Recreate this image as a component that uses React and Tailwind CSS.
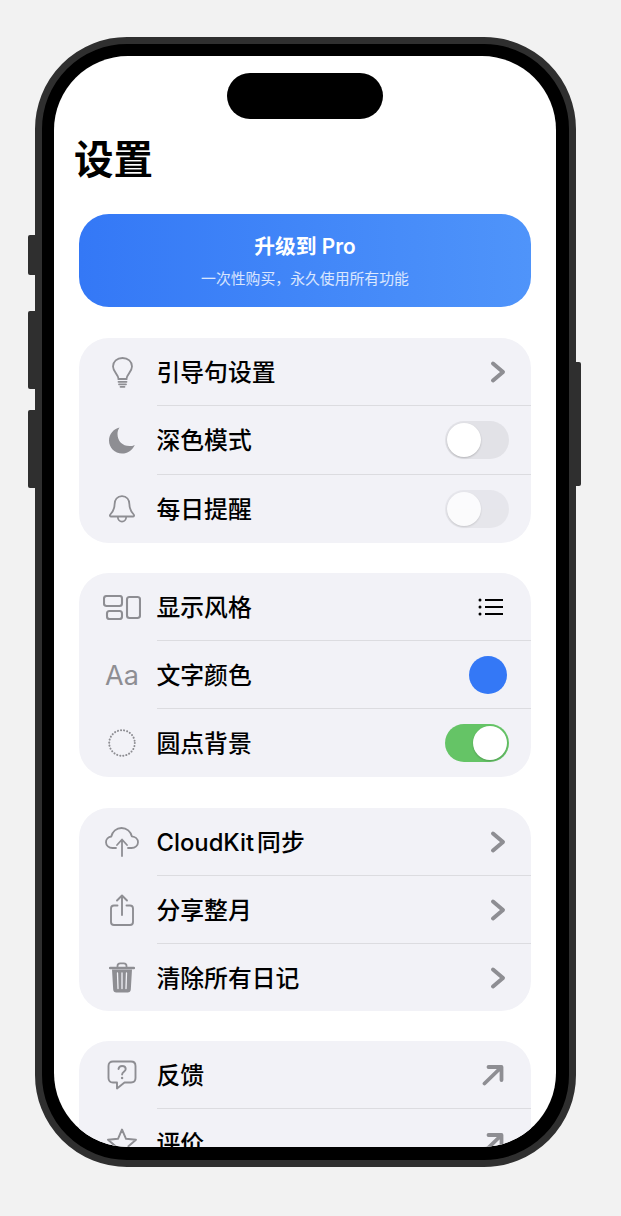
const font = { fontFamily: '"Inter", "Noto Sans CJK SC", sans-serif' }

function Chevron() {
  return (
    <svg width="16" height="24" viewBox="0 0 16 24" fill="none" stroke="#8e8e93" strokeWidth="4" strokeLinecap="round" strokeLinejoin="round" className="mr-[3px]">
      <path d="M3 3.500l10 8.500-10 8.500" />
    </svg>
  )
}

function Arrow() {
  return (
    <svg width="22" height="22" viewBox="0 0 22 22" fill="none" stroke="#8e8e93" strokeWidth="3.800" strokeLinecap="round" strokeLinejoin="round" className="mr-[5px]">
      <path d="M2.500 19.500L19 3.500M6.500 3h13v13" />
    </svg>
  )
}

function Toggle({ on, faded }) {
  return (
    <div className={`flex h-[38px] w-[64px] items-center rounded-full p-[2px] ${on ? 'justify-end bg-[#65c466]' : 'justify-start bg-[#e2e2e7]'} ${faded ? 'opacity-70' : ''}`}>
      <div className="h-[34px] w-[34px] rounded-full bg-white shadow-[0_1px_2px_rgba(0,0,0,0.2)]" />
    </div>
  )
}

const Bulb = () => (
  <svg width="21" height="31" viewBox="0 0 21 31" fill="none" stroke="#8e8e93" strokeWidth="1.800" strokeLinecap="round">
    <path d="M6.500 22c0-4.500-5.500-7-5.500-12.500C1 4.500 5 1 10.500 1S20 4.500 20 9.500C20 15 14.500 17.500 14.500 22z" />
    <path d="M6.500 24.800h8M7 27.300h7M8.500 29.800h4" />
  </svg>
)

const Moon = () => (
  <svg width="28" height="27" viewBox="0 0 28 27" fill="#8e8e93">
    <path d="M11.500 .5C5.500 2 1 7 1 13.500 1 20.700 6.800 26.500 14 26.500c5.600 0 10.500-3.500 12.800-8.600-1.600.8-3.500 1.200-5.300 1.200C14.500 19.100 9.500 14 9.500 7c0-2.400.7-4.600 2-6.500z" />
  </svg>
)

const Bell = () => (
  <svg width="28" height="28" viewBox="0 0 28 28" fill="none" stroke="#8e8e93" strokeWidth="1.800" strokeLinejoin="round">
    <path d="M14 1.200c-4.800 0-7.400 3.500-7.400 8 0 4.800-1.500 7.300-4.300 10.300-.8.900-.3 2 .8 2h21.800c1.100 0 1.600-1.100.8-2-2.800-3-4.300-5.500-4.300-10.300 0-4.500-2.600-8-7.400-8z" />
    <path d="M9.800 21.800c0 2.800 1.900 4.800 4.200 4.800s4.200-2 4.200-4.800" />
  </svg>
)

const Layout = () => (
  <svg width="38" height="25" viewBox="0 0 38 25" fill="none" stroke="#8e8e93" strokeWidth="2.100">
    <rect x="1" y="1" width="18" height="10" rx="2.500" />
    <rect x="4" y="16" width="15" height="8" rx="2.500" />
    <rect x="24" y="2" width="13" height="21" rx="2.500" />
  </svg>
)

const Dots = () => (
  <svg width="28" height="28" viewBox="0 0 28 28" fill="none" stroke="#8e8e93" strokeWidth="2" strokeLinecap="round" strokeDasharray="0.1 3">
    <circle cx="14" cy="14" r="12.800" />
  </svg>
)

const CloudUp = () => (
  <svg width="34" height="30" viewBox="0 0 34 30" fill="none" stroke="#8e8e93" strokeWidth="1.800" strokeLinecap="round" strokeLinejoin="round">
    <path d="M11 21H7.500C3.800 21 1 18.500 1 15.200c0-3 2.300-5.400 5.300-5.700C7.300 4.600 11.500 1 16.500 1c5.200 0 9.300 3.500 10.300 8.300 3.500.3 6.200 2.800 6.200 5.900 0 3.300-2.800 5.800-6.500 5.800H23" />
    <path d="M17 29V13M12 18l5-5.500 5 5.500" />
  </svg>
)

const Share = () => (
  <svg width="24" height="32" viewBox="0 0 24 32" fill="none" stroke="#8e8e93" strokeWidth="1.900" strokeLinecap="round" strokeLinejoin="round">
    <path d="M7.500 11.500H4c-1.700 0-3 1.300-3 3V28c0 1.700 1.300 3 3 3h16c1.700 0 3-1.300 3-3V14.500c0-1.700-1.300-3-3-3h-3.500" />
    <path d="M12 21V2M7 6.500L12 1.500l5 5" />
  </svg>
)

const Trash = () => (
  <svg width="26" height="31" viewBox="0 0 26 31" fill="none">
    <path d="M1 6h24" stroke="#8e8e93" strokeWidth="2.400" strokeLinecap="round" />
    <path d="M8.500 5.500V4c0-1.600 1-2.700 2.700-2.700h3.600c1.700 0 2.700 1.100 2.700 2.700v1.500" stroke="#8e8e93" strokeWidth="1.800" />
    <path d="M3 7.500h20l-1.200 20c-.1 1.900-1.300 3-3.100 3H7.300c-1.800 0-3-1.100-3.100-3z" fill="#8e8e93" />
    <path d="M8.500 11l.5 15.500M13 11v15.500M17.500 11L17 26.500" stroke="#f2f2f7" strokeWidth="1.300" strokeLinecap="round" />
  </svg>
)

const Question = () => (
  <svg width="30" height="30" viewBox="0 0 30 30" fill="none" stroke="#8e8e93" strokeWidth="1.900" strokeLinejoin="round">
    <path d="M6 1.500h18c2.800 0 4.500 1.700 4.500 4.500v12c0 2.800-1.700 4.500-4.500 4.500h-6.500L10 28.500v-6H6c-2.800 0-4.500-1.700-4.500-4.500V6c0-2.800 1.700-4.500 4.500-4.500z" />
    <path d="M11.500 9c.3-1.900 1.700-3 3.600-3 2.100 0 3.600 1.300 3.600 3 0 2.700-3.600 2.800-3.600 5.500" strokeLinecap="round" />
    <circle cx="15.100" cy="18" r="1.200" fill="#8e8e93" stroke="none" />
  </svg>
)

const Star = () => (
  <svg width="30" height="30" viewBox="0 0 30 30" fill="none" stroke="#8e8e93" strokeWidth="1.900" strokeLinejoin="round">
    <path d="M15 1.500l4 9.300 10 .9-7.600 6.600 2.300 9.800L15 23l-8.700 5.100 2.300-9.800L1 11.700l10-.9z" />
  </svg>
)

const ListIcon = () => (
  <svg width="26" height="20" viewBox="0 0 26 20" fill="none" stroke="#000" className="mr-[5px]">
    <circle cx="2" cy="3" r="1.500" fill="#000" stroke="none" />
    <circle cx="2" cy="10" r="1.500" fill="#000" stroke="none" />
    <circle cx="2" cy="17" r="1.500" fill="#000" stroke="none" />
    <path d="M7 3h18M7 10h18M7 17h18" strokeWidth="2" />
  </svg>
)

function Row({ icon, label, right, h, last }) {
  return (
    <div className={`flex items-center ${h}`}>
      <div className="flex w-[78px] shrink-0 items-center justify-center pl-[8px]">{icon}</div>
      <div className={`flex h-full flex-1 items-center justify-between pr-[22px] ${last ? '' : 'border-b border-[#dcdce0]'}`}>
        <span className="mt-[2px] -ml-[0.500px] text-[23.800px] font-medium text-black">{label}</span>
        {right}
      </div>
    </div>
  )
}

function Group({ children, className }) {
  return <div className={`overflow-hidden rounded-[30px] bg-[#f2f2f7] ${className}`}>{children}</div>
}

export default function App() {
  return (
    <div className="relative h-[1216px] w-[621px] overflow-hidden bg-[#f2f2f2] pl-[35px] pt-[37px]" style={font}>
      {/* side buttons */}
      <div className="absolute left-[28px] top-[235px] h-[40px] w-[7px] rounded-l-[2px] bg-[#2f2f2f]" />
      <div className="absolute left-[28px] top-[311px] h-[78px] w-[7px] rounded-l-[2px] bg-[#2f2f2f]" />
      <div className="absolute left-[28px] top-[410px] h-[78px] w-[7px] rounded-l-[2px] bg-[#2f2f2f]" />
      <div className="absolute left-[576px] top-[362px] h-[124px] w-[5px] rounded-r-[2px] bg-[#2f2f2f]" />

      {/* phone frame */}
      <div className="h-[1130px] w-[541px] rounded-[92px] border-[7px] border-[#2f2f2f] bg-black p-[12px]">
        <div className="relative h-[1091px] w-[502px] overflow-hidden rounded-[74px] bg-white px-[25px] pt-[81px]">
          <div className="absolute left-[173px] top-[17px] h-[46px] w-[156px] rounded-full bg-black" />

          <h1 className="-ml-[5px] text-[39.500px] font-bold leading-[46px] text-black">设置</h1>

          <div className="mt-[31px] flex h-[93px] flex-col items-center justify-center rounded-[30px] bg-gradient-to-r from-[#3478f6] to-[#4f94fa] text-white">
            <div className="text-[20.800px] font-semibold leading-[28px]">升级到 Pro</div>
            <div className="mt-[8px] text-[14.850px] leading-[20px] text-white/80">一次性购买，永久使用所有功能</div>
          </div>

          <Group className="mt-[31px]">
            <Row h="h-[68px]" icon={<Bulb />} label="引导句设置" right={<Chevron />} />
            <Row h="h-[69px]" icon={<Moon />} label="深色模式" right={<Toggle />} />
            <Row h="h-[68px]" last icon={<Bell />} label="每日提醒" right={<Toggle faded />} />
          </Group>

          <Group className="mt-[30px]">
            <Row h="h-[68px]" icon={<Layout />} label="显示风格" right={<ListIcon />} />
            <Row h="h-[68px]" icon={<span className="text-[27px] font-normal leading-none text-[#8e8e93]">Aa</span>} label="文字颜色" right={<div className="mr-[2px] h-[38px] w-[38px] rounded-full bg-[#3478f6]" />} />
            <Row h="h-[68px]" last icon={<Dots />} label="圆点背景" right={<Toggle on />} />
          </Group>

          <Group className="mt-[31px]">
            <Row h="h-[68px]" icon={<CloudUp />} label={<>CloudKit<span className="ml-[3px]">同步</span></>} right={<Chevron />} />
            <Row h="h-[68px]" icon={<Share />} label="分享整月" right={<Chevron />} />
            <Row h="h-[67px]" last icon={<Trash />} label="清除所有日记" right={<Chevron />} />
          </Group>

          <Group className="mt-[30px]">
            <Row h="h-[68px]" icon={<Question />} label="反馈" right={<Arrow />} />
            <Row h="h-[68px]" last icon={<Star />} label="评价" right={<Arrow />} />
          </Group>
        </div>
      </div>
    </div>
  )
}
